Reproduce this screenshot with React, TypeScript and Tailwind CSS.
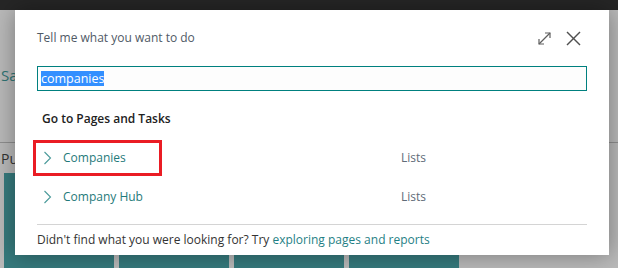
function ExpandIcon() {
  return (
    <svg width="15" height="15" viewBox="0 0 15 15" fill="none" stroke="#5f5f5f" strokeWidth="1.2">
      <path d="M2 13 L13 2" />
      <path d="M8 2 H13 V7" />
      <path d="M2 8 V13 H7" />
    </svg>
  );
}

function CloseIcon() {
  return (
    <svg width="15" height="15" viewBox="0 0 15 15" fill="none" stroke="#505050" strokeWidth="1.4">
      <path d="M1 1 L14 14" />
      <path d="M14 1 L1 14" />
    </svg>
  );
}

function Chevron() {
  return (
    <svg width="9" height="14" viewBox="0 0 9 14" fill="none" stroke="#4a9a9a" strokeWidth="1.1">
      <path d="M1.5 1 L7.5 7 L1.5 13" />
    </svg>
  );
}

const results = [
  { name: 'Companies', kind: 'Lists', highlighted: true },
  { name: 'Company Hub', kind: 'Lists', highlighted: false },
];

export default function App() {
  return (
    <div className="relative h-[268px] w-[618px] overflow-hidden bg-[#b9b9b9] font-['Open_Sans',sans-serif]">
      <div className="h-[10px] bg-[#262626]" />
      <div className="flex flex-col">
        <div className="h-[54px]" />
        <div className="flex h-[22px] items-center pl-[1px] text-[15px] text-[#2f7474]">Sa</div>
        <div className="h-[56px]" />
        <div className="h-px bg-[#8e8e8e]" />
        <div className="flex h-[30px] items-center pl-[1px] text-[14px] text-[#333]">Pu</div>
        <div className="flex gap-[5px] pl-[4px]">
          {[0, 1, 2, 3].map((i) => (
            <div key={i} className="h-[100px] w-[110px] bg-[#367a7d]" />
          ))}
        </div>
      </div>

      <div
        role="dialog"
        className="absolute left-[15px] top-[10px] flex h-[245px] w-[594px] flex-col bg-white px-[22px] shadow-[0_0_22px_rgba(0,0,0,0.35)]"
      >
        <div className="flex h-[56px] items-center justify-between">
          <span className="text-[12px] text-[#505a66]">Tell me what you want to do</span>
          <div className="mr-[6px] flex items-center gap-[14px]">
            <ExpandIcon />
            <CloseIcon />
          </div>
        </div>
        <div className="flex h-[25px] items-center border border-[#00807f] bg-[#fdfdfd] px-[3px]">
          <span className="bg-[#338fff] text-[12.5px] leading-[15px] text-white">companies</span>
        </div>
        <div className="flex h-[37px] items-end pl-[5px] text-[12px] font-semibold text-[#212121]">
          Go to Pages and Tasks
        </div>
        <div className="mt-[10px] flex flex-col">
          {results.map((r) => (
            <div key={r.name} className="flex h-[39px] items-center">
              <div
                className={
                  r.highlighted
                    ? 'ml-[-4px] flex h-[36px] w-[129px] items-center border-[3px] border-[#ea1c24] pl-[7px]'
                    : 'ml-[-4px] flex h-[36px] w-[129px] items-center border-[3px] border-transparent pl-[7px]'
                }
              >
                <Chevron />
                <span className="ml-[11px] whitespace-nowrap text-[12px] text-[#1f7a7a]">{r.name}</span>
              </div>
              <span className="ml-[239px] text-[12px] text-[#606b78]">{r.kind}</span>
            </div>
          ))}
        </div>
        <div className="mt-[8px] h-px bg-[#d4d4d4]" />
        <div className="flex h-[30px] items-center text-[12px] text-[#333]">
          Didn't find what you were looking for? Try&nbsp;
          <span className="text-[#1f7f85]">exploring pages and reports</span>
        </div>
      </div>
    </div>
  );
}
